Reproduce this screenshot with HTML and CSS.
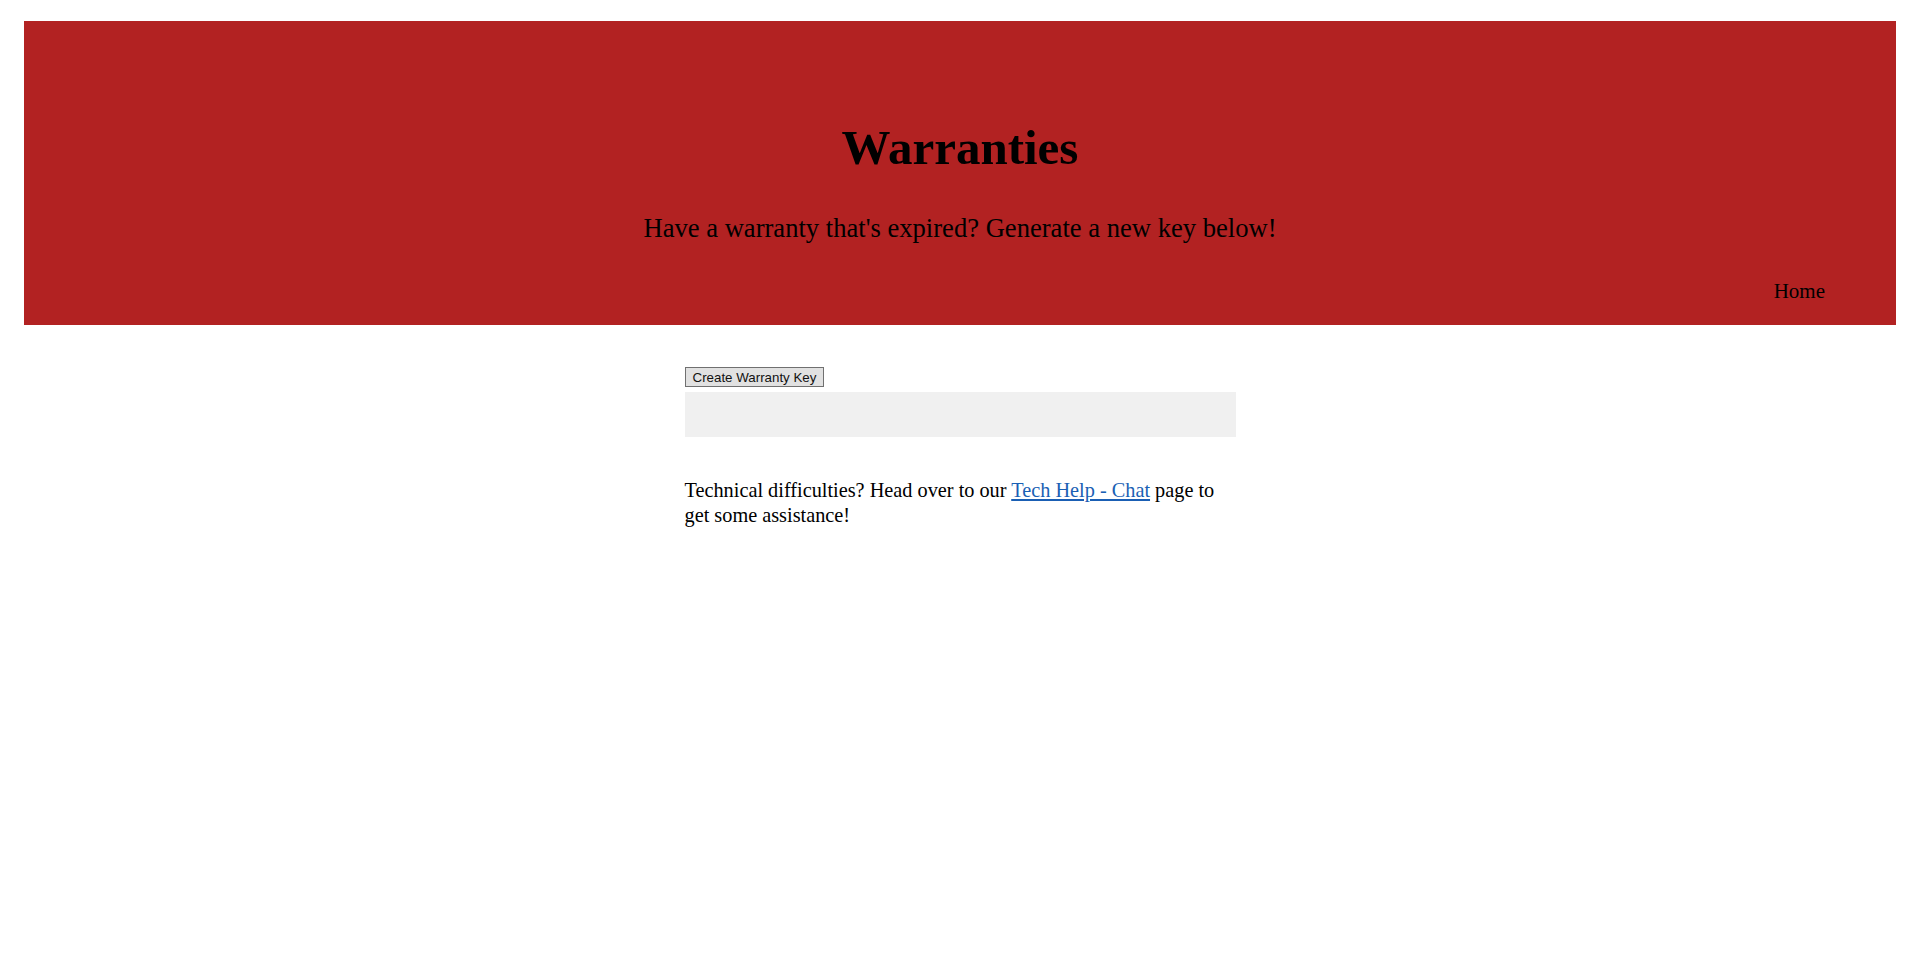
FILE: index.html
```html
<!DOCTYPE html>
<html lang="en">
<head>
<meta charset="utf-8">
<title>Warranties</title>
<link rel="stylesheet" href="styles.css">
</head>
<body>
<header class="banner">
  <h1 class="banner-title">Warranties</h1>
  <p class="banner-sub">Have a warranty that's expired? Generate a new key below!</p>
  <nav class="banner-nav"><a class="nav-link" href="#">Home</a></nav>
</header>
<main class="content">
  <button class="key-btn" type="button">Create Warranty Key</button>
  <div class="key-output"></div>
  <p class="help">Technical difficulties? Head over to our <a class="help-link" href="#">Tech Help - Chat</a> page to get some assistance!</p>
</main>
</body>
</html>
```

FILE: styles.css
```css
html, body {
  background: #ffffff;
}
body {
  margin: 21px 17px 0 24px;
  font-family: "Palatino Linotype", "Book Antiqua", Palatino, "Liberation Serif", serif;
  color: #000;
}
.banner {
  background: #b22222;
  height: 304px;
  box-sizing: border-box;
  padding-top: 99px;
  display: flex;
  flex-direction: column;
  align-items: center;
}
.banner-title {
  margin: 0;
  font-size: 49px;
  font-weight: bold;
  line-height: 56px;
}
.banner-sub {
  margin: 37px 0 0;
  font-size: 26.6px;
  line-height: 30px;
}
.banner-nav {
  align-self: stretch;
  display: flex;
  justify-content: flex-end;
  padding-right: 71px;
  margin-top: 36px;
}
.nav-link {
  color: #000;
  text-decoration: none;
  font-size: 21px;
  line-height: 24px;
}
.content {
  width: 551px;
  margin: 42px auto 0;
}
.key-btn {
  display: block;
  height: 20px;
  margin: 0;
  padding: 0 7px;
  font-family: Arial, "Liberation Sans", sans-serif;
  font-size: 13.33px;
  color: #111;
  background: #e1e1e1;
  border: 1px solid #707070;
  border-radius: 0;
}
.key-output {
  height: 45px;
  margin-top: 5px;
  background: #f0f0f0;
}
.help {
  margin: 41px 0 0;
  font-size: 20.3px;
  line-height: 25px;
}
.help-link {
  color: #1a5fb4;
}
```
